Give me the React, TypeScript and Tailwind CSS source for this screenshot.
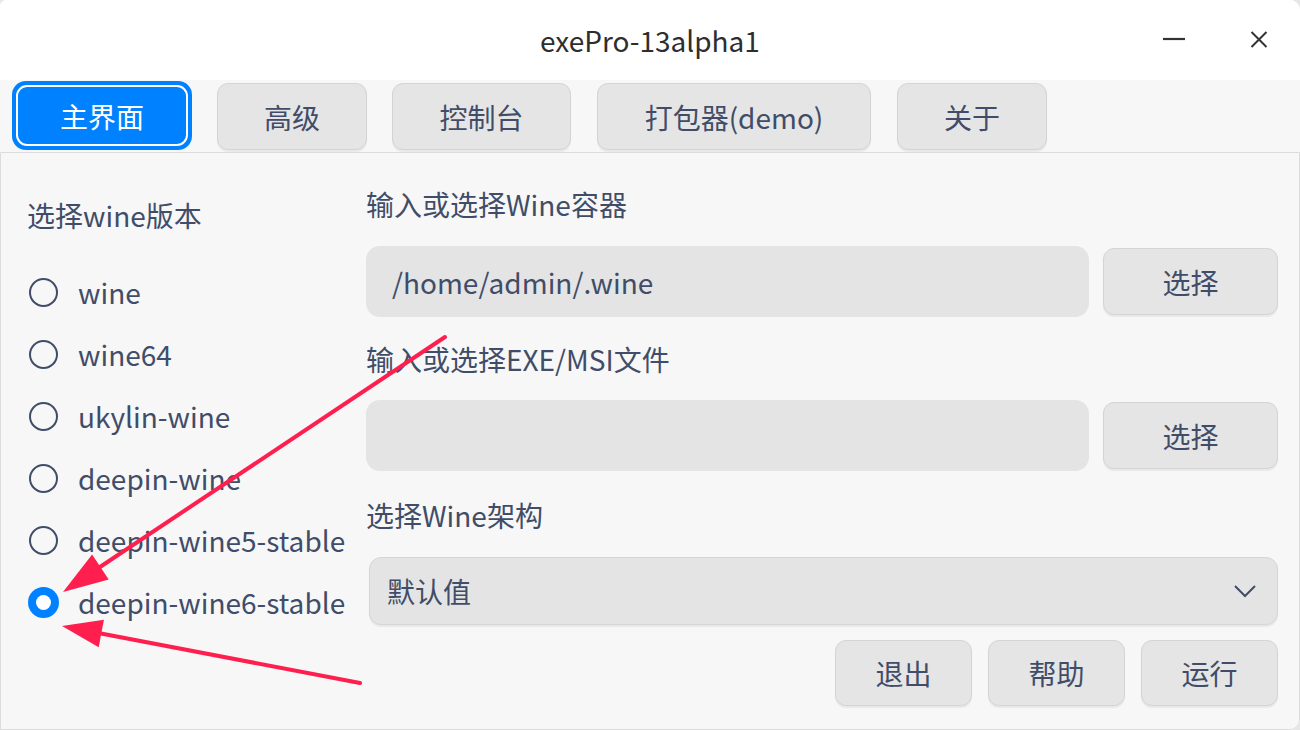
import React from "react";

const FONT = { fontFamily: '"Noto Sans CJK SC", "Noto Sans", sans-serif' };

function GrayButton({ children, className }: { children: React.ReactNode; className: string }) {
  return (
    <div
      className={
        "flex items-center justify-center rounded-[11px] border border-[#d4d4d4] bg-[#e5e5e5] text-[28px] text-[#414d68] shadow-[0_2px_1px_rgba(0,0,0,0.06)] " +
        className
      }
    >
      {children}
    </div>
  );
}

function Radio({ label, checked }: { label: string; checked?: boolean }) {
  return (
    <div className="flex h-[62px] items-center">
      {checked ? (
        <div className="ml-[1px] flex h-[31px] w-[31px] items-center justify-center rounded-full bg-[#0081ff]">
          <div className="h-[15px] w-[15px] rounded-full bg-white" />
        </div>
      ) : (
        <div className="ml-[2px] h-[29px] w-[29px] rounded-full border-[2px] border-[#414d68]" />
      )}
      <span className={"text-[28px] leading-[36px] text-[#414d68] " + (checked ? "ml-[19px]" : "ml-[20px]")}>{label}</span>
    </div>
  );
}

export default function App() {
  return (
    <div className="relative h-[730px] w-[1300px] overflow-hidden bg-[#e6e6e6]" style={FONT}>
      <div className="flex h-[730px] w-[1300px] flex-col overflow-hidden rounded-tl-[6px] rounded-tr-[10px] rounded-br-[10px] bg-[#f7f7f7]">
        {/* Title bar */}
        <div className="relative flex h-[80px] shrink-0 items-center justify-center bg-white">
          <span className="text-[28px] leading-[36px] text-[#2e2e2e]">exePro-13alpha1</span>
          <div className="absolute right-[31px] top-0 flex h-[80px] items-center gap-[63px]">
            <svg width="24" height="24" viewBox="0 0 24 24">
              <path d="M1 11 H23" stroke="#333" strokeWidth="2.2" />
            </svg>
            <svg width="20" height="20" viewBox="0 0 20 20">
              <path d="M2.5 2 L17.5 17 M17.5 2 L2.5 17" stroke="#333" strokeWidth="2" />
            </svg>
          </div>
        </div>

        {/* Tab bar */}
        <div className="flex h-[72px] shrink-0 items-start bg-[#f7f7f7] pl-[12px] pt-[1px]">
          <div className="flex h-[69px] w-[180px] items-center justify-center rounded-[14px] bg-[#0081ff] p-[4px]">
            <div className="flex h-full w-full items-center justify-center rounded-[11px] border-[2px] border-white text-[28px] text-white">
              主界面
            </div>
          </div>
          <GrayButton className="ml-[25px] mt-[2px] h-[67px] w-[150px]">高级</GrayButton>
          <GrayButton className="ml-[25px] mt-[2px] h-[67px] w-[179px]">控制台</GrayButton>
          <GrayButton className="ml-[26px] mt-[2px] h-[67px] w-[274px]">打包器(demo)</GrayButton>
          <GrayButton className="ml-[26px] mt-[2px] h-[67px] w-[150px]">关于</GrayButton>
        </div>

        {/* Panel */}
        <div className="flex flex-1 rounded-br-[10px] border border-[#dcdcdc] bg-[#f7f7f7]">
          {/* Left column */}
          <div className="flex w-[365px] shrink-0 flex-col pl-[26px] pt-[44px]">
            <div className="text-[28px] leading-[36px] text-[#414d68]">选择wine版本</div>
            <div className="mt-[28px] flex flex-col">
              <Radio label="wine" />
              <Radio label="wine64" />
              <Radio label="ukylin-wine" />
              <Radio label="deepin-wine" />
              <Radio label="deepin-wine5-stable" />
              <Radio label="deepin-wine6-stable" checked />
            </div>
          </div>

          {/* Right column */}
          <div className="flex flex-1 flex-col pr-[21px] pt-[33px]">
            <div className="text-[28px] leading-[36px] text-[#414d68]">输入或选择Wine容器</div>
            <div className="mt-[24px] flex items-center gap-[14px]">
              <div className="flex h-[71px] flex-1 items-center rounded-[14px] bg-[#e4e4e4] pl-[26px] text-[28px] text-[#414d68]">
                /home/admin/.wine
              </div>
              <GrayButton className="h-[67px] w-[175px]">选择</GrayButton>
            </div>

            <div className="mt-[24px] text-[28px] leading-[36px] text-[#414d68]">输入或选择EXE/MSI文件</div>
            <div className="mt-[23px] flex items-center gap-[14px]">
              <div className="h-[71px] flex-1 rounded-[14px] bg-[#e4e4e4]" />
              <GrayButton className="h-[67px] w-[175px]">选择</GrayButton>
            </div>

            <div className="mt-[26px] text-[28px] leading-[36px] text-[#414d68]">选择Wine架构</div>
            <div className="ml-[3px] mt-[24px] flex h-[68px] items-center justify-between rounded-[12px] border border-[#d6d6d6] bg-[#e4e4e4] pl-[17px] pr-[20px] shadow-[0_2px_1px_rgba(0,0,0,0.06)]">
              <span className="text-[28px] text-[#414d68]">默认值</span>
              <svg width="24" height="14" viewBox="0 0 24 14">
                <path d="M2 2 L12 12 L22 2" fill="none" stroke="#414d68" strokeWidth="2" />
              </svg>
            </div>

            <div className="mt-[15px] flex justify-end gap-[16px]">
              <GrayButton className="h-[66px] w-[137px]">退出</GrayButton>
              <GrayButton className="h-[66px] w-[137px]">帮助</GrayButton>
              <GrayButton className="h-[66px] w-[137px]">运行</GrayButton>
            </div>
          </div>
        </div>
      </div>

      {/* Annotation arrows */}
      <svg className="pointer-events-none absolute left-0 top-0" width="1300" height="730" viewBox="0 0 1300 730">
        <line x1="445" y1="337" x2="100" y2="567" stroke="#ff1f4f" strokeWidth="4" strokeLinecap="round" />
        <polygon points="63,592 108.7,579.5 92.1,554.5" fill="#ff1f4f" />
        <line x1="360" y1="683" x2="101" y2="633.5" stroke="#ff1f4f" strokeWidth="4" strokeLinecap="round" />
        <polygon points="62,626 103.9,619.8 98.7,647.2" fill="#ff1f4f" />
      </svg>
    </div>
  );
}
